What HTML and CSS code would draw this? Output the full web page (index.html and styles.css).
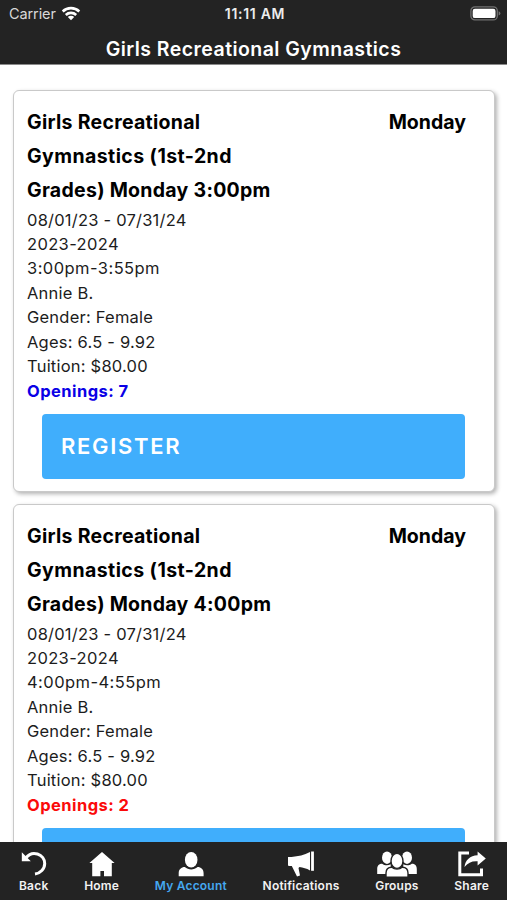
FILE: index.html
```html
<!DOCTYPE html>
<html lang="en">
<head>
<meta charset="utf-8">
<title>Girls Recreational Gymnastics</title>
<link rel="stylesheet" href="styles.css">
</head>
<body>
<div class="app">
  <header class="header">
    <div class="status">
      <div class="carrier"><span>Carrier</span>
        <svg class="wifi" width="20" height="15" viewBox="0 0 20 15" fill="none" stroke="#fff" stroke-width="2.6"><path d="M1.7 5.5a12 12 0 0 1 16.6 0M4.8 9a7.5 7.5 0 0 1 10.4 0"/><path d="M10 14.3L6.8 11.1a4.6 4.6 0 0 1 6.4 0z" fill="#fff" stroke="none"/></svg>
      </div>
      <div class="clock">11:11 AM</div>
      <div class="power"><svg width="31" height="15" viewBox="0 0 31 15"><rect x=".9" y=".9" width="26.4" height="13" rx="4" fill="none" stroke="#717171" stroke-width="1.3"/><rect x="2.7" y="2.7" width="22.8" height="9.4" rx="2.2" fill="#fff"/><path d="M28.6 5.2q1.8.6 1.8 2.2t-1.8 2.2z" fill="#717171"/></svg></div>
    </div>
    <h1 class="title">Girls Recreational Gymnastics</h1>
  </header>
  <main class="list">
    <article class="card">
      <div class="card-head">
        <h2 class="name">Girls Recreational<br><span class="grade">Gymnastics (1st-2nd</span><br>Grades) Monday 3:00pm</h2>
        <div class="day">Monday</div>
      </div>
      <div class="details">
        <div class="dates">08/01/23 - 07/31/24</div>
        <div class="season">2023-2024</div>
        <div class="time">3:00pm-3:55pm</div>
        <div>Annie B.</div>
        <div>Gender: Female</div>
        <div>Ages: 6.5 - 9.92</div>
        <div>Tuition: $80.00</div>
        <div class="openings">Openings: 7</div>
      </div>
      <div class="register">REGISTER</div>
    </article>
    <article class="card">
      <div class="card-head">
        <h2 class="name">Girls Recreational<br><span class="grade">Gymnastics (1st-2nd</span><br>Grades) Monday 4:00pm</h2>
        <div class="day">Monday</div>
      </div>
      <div class="details">
        <div class="dates">08/01/23 - 07/31/24</div>
        <div class="season">2023-2024</div>
        <div class="time">4:00pm-4:55pm</div>
        <div>Annie B.</div>
        <div>Gender: Female</div>
        <div>Ages: 6.5 - 9.92</div>
        <div>Tuition: $80.00</div>
        <div class="openings low">Openings: 2</div>
      </div>
      <div class="register"></div>
    </article>
  </main>
  <nav class="tabs">
    <div class="tab">
      <svg width="26" height="26" viewBox="0 0 26 26"><path d="M5 6.800C8 3 12.500 1.700 16.500 3c4.400 1.400 7.200 5.300 7.200 9.500 0 5.400-4.300 9.700-9.700 10.500" fill="none" stroke="#fff" stroke-width="3"/><path d="M.8 1.300v8.900h9z" fill="#fff"/></svg>
      <span>Back</span>
    </div>
    <div class="tab">
      <svg width="26" height="26" viewBox="0 0 26 26" fill="#fff"><path d="M13 .9L25.600 12h-2.800v13.200h-7.800v-5.200h-3.600v5.200H3.200V12H.4z"/></svg>
      <span>Home</span>
    </div>
    <div class="tab active">
      <svg width="26" height="26" viewBox="0 0 26 26" fill="#fff"><ellipse cx="13.200" cy="8.700" rx="6.300" ry="7.800"/><path d="M.7 25.200v-2.900c0-3.900 2.700-6.200 6.100-6.200 3.700 3.300 9.100 3.300 12.800 0 3.400 0 6 2.300 6 6.200v2.900z"/></svg>
      <span>My Account</span>
    </div>
    <div class="tab">
      <svg width="28" height="26" viewBox="0 0 28 26" fill="#fff"><path d="M1 5.900h3.500C11.500 5.500 17 3.900 23 1v18.400c-3.500-1.800-7-2.900-10.500-3.300l-1 1 1.500 7.500-3 .8L4.800 15H2Q1 15 1 14z"/><path d="M24.100.5h2.800v19.300h-2.800z"/></svg>
      <span>Notifications</span>
    </div>
    <div class="tab">
      <svg width="42" height="26" viewBox="0 0 42 26" fill="#fff"><ellipse cx="11" cy="6.700" rx="5" ry="6.200"/><ellipse cx="31" cy="6.700" rx="5" ry="6.200"/><path d="M1.200 23v-4.800c0-4 2-5.500 5-5.500 2.500 2 6 2 8.500.5V23zM40.800 23v-4.800c0-4-2-5.500-5-5.500-2.500 2-6 2-8.500.5V23z"/><g stroke="#232323" stroke-width="1.400"><path d="M10 26.100v-4c0-4.200 2.500-5.900 5.700-5.900 3.100 2.500 7.500 2.500 10.600 0 3.200 0 5.700 1.700 5.700 5.900v4z"/><ellipse cx="21" cy="9.900" rx="6" ry="7.500"/></g></svg>
      <span>Groups</span>
    </div>
    <div class="tab">
      <svg width="30" height="26" viewBox="0 0 30 26"><path d="M12 1.900H2.800v21.900H24.500v-6.200" fill="none" stroke="#fff" stroke-width="3"/><path d="M20.600.5l8.200 7-8.200 7V10.200C15 9.800 11 11.500 7.500 16c.8-7 5.500-11.200 13.100-11.700z" fill="#fff"/></svg>
      <span>Share</span>
    </div>
  </nav>
</div>
</body>
</html>
```
FILE: styles.css
```css
* { box-sizing: border-box; }
body { margin: 0; background: #fff; font-family: Inter, "Liberation Sans", sans-serif; color: #000; }
h1, h2 { margin: 0; }
.app { height: 900px; display: flex; flex-direction: column; overflow: hidden; }

.header { flex: none; height: 65px; background: #232323; color: #fff; border-bottom: 1px solid #8a8a8a; }
.status { display: grid; grid-template-columns: 1fr auto 1fr; align-items: center; height: 28px; padding: 0 6px 0 9px; }
.carrier { display: flex; align-items: center; gap: 5px; font-size: 14.5px; letter-spacing: -0.1px; color: #d8d8d8; }
.carrier span { margin-top: -1px; }
.wifi { margin-top: -2px; }
.clock { margin-top: -1px; font-size: 14px; font-weight: 600; color: #ececec; letter-spacing: 0.7px; }
.power { justify-self: end; height: 15px; margin-top: -1px; }
.power svg, .tab svg { display: block; }
.title { margin-top: 8px; font-size: 19.5px; line-height: 26px; font-weight: 600; text-align: center; letter-spacing: 0.45px; }

.list { flex: 1; min-height: 0; overflow: hidden; padding: 25px 12px 0 13px; }
.card { height: 402px; margin-bottom: 12px; padding: 13.5px 29px 12px 13px; border: 1.5px solid #c9c9c9; border-radius: 6px; background: #fff; box-shadow: 2px 2px 4px rgba(0, 0, 0, 0.3); }
.card-head { display: flex; justify-content: space-between; font-size: 19.500px; line-height: 34.2px; font-weight: 700; letter-spacing: 0.28px; }
.name { font-size: inherit; font-weight: inherit; white-space: nowrap; }
.grade { letter-spacing: 0.42px; }
.day { margin-right: -1px; letter-spacing: 0; }
.details { margin-top: 0.5px; font-size: 16.500px; line-height: 24.42px; letter-spacing: 0.22px; color: #1c1c1c; }
.season { letter-spacing: 0.36px; }
.time { letter-spacing: 0.44px; }
.openings { font-weight: 700; letter-spacing: 0.45px; color: #0a00e6; }
.openings.low { color: #fb0a0a; }
.register { height: 65px; margin: 11px 0 0 15px; padding-left: 19px; border-radius: 4px; background: #40aefc; color: #fff; font-size: 22px; line-height: 65px; font-weight: 600; letter-spacing: 1.700px; }

.tabs { flex: none; display: flex; justify-content: space-between; height: 58.5px; padding: 9.5px 18px 0 19px; background: #232323; color: #f2f2f2; }
.tab { display: flex; flex-direction: column; align-items: center; gap: 1px; font-size: 12px; line-height: 15px; font-weight: 600; letter-spacing: 0.2px; white-space: nowrap; }
.tab.active { color: #45a8f0; }
```
